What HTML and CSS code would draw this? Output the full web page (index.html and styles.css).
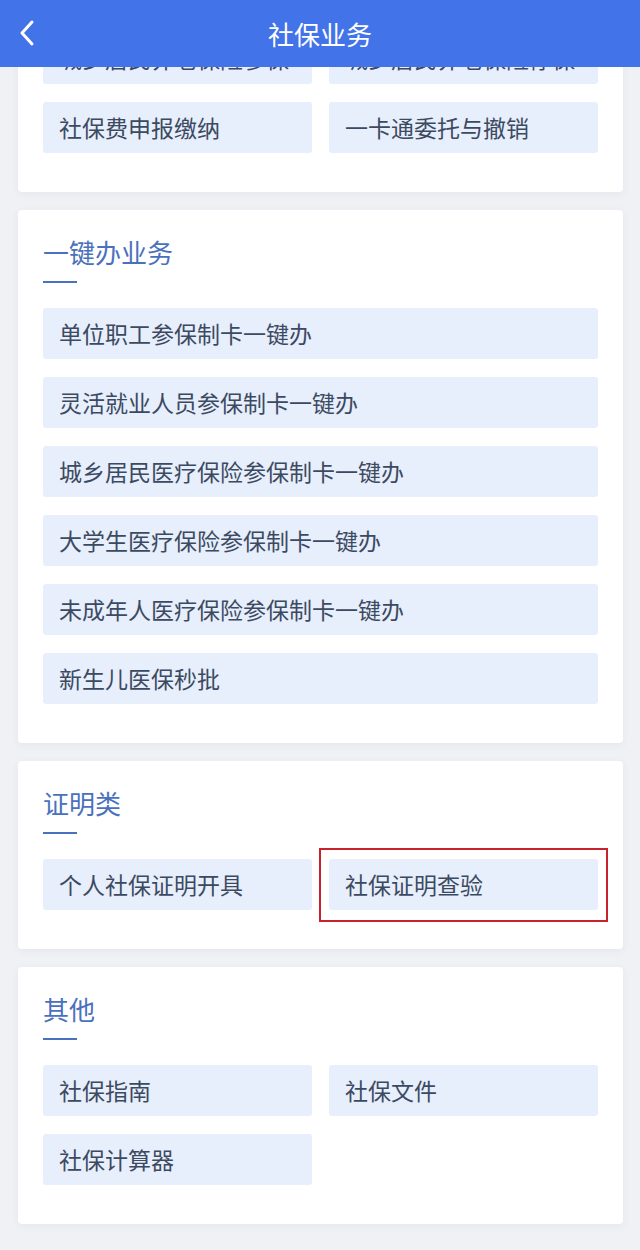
FILE: index.html
```html
<!DOCTYPE html>
<html lang="zh-CN">
<head>
<meta charset="utf-8">
<title>社保业务</title>
<link rel="stylesheet" href="styles.css">
</head>
<body>
<header class="topbar">
  <svg class="back" width="20" height="30" viewBox="0 0 20 30"><polyline points="13,3 3,14 13,25" fill="none" stroke="#fff" stroke-width="3" stroke-linecap="round" stroke-linejoin="round"/></svg>
  <h1 class="title">社保业务</h1>
</header>
<main class="page">
  <section class="card card-first">
    <div class="grid">
      <div class="item">城乡居民养老保险参保</div>
      <div class="item">城乡居民养老保险停保</div>
      <div class="item">社保费申报缴纳</div>
      <div class="item">一卡通委托与撤销</div>
    </div>
  </section>
  <section class="card">
    <h2 class="heading">一键办业务</h2>
    <div class="rule"></div>
    <div class="list">
      <div class="item">单位职工参保制卡一键办</div>
      <div class="item">灵活就业人员参保制卡一键办</div>
      <div class="item">城乡居民医疗保险参保制卡一键办</div>
      <div class="item">大学生医疗保险参保制卡一键办</div>
      <div class="item">未成年人医疗保险参保制卡一键办</div>
      <div class="item">新生儿医保秒批</div>
    </div>
  </section>
  <section class="card">
    <h2 class="heading">证明类</h2>
    <div class="rule"></div>
    <div class="grid">
      <div class="item">个人社保证明开具</div>
      <div class="item item-marked">社保证明查验<span class="mark"></span></div>
    </div>
  </section>
  <section class="card">
    <h2 class="heading">其他</h2>
    <div class="rule"></div>
    <div class="grid">
      <div class="item">社保指南</div>
      <div class="item">社保文件</div>
      <div class="item">社保计算器</div>
    </div>
  </section>
</main>
</body>
</html>
```
FILE: styles.css
```css
html, body {
  margin: 0;
  padding: 0;
  background: #f0f1f5;
  font-family: "Noto Sans CJK SC", "Noto Sans", sans-serif;
}
.topbar {
  position: fixed;
  top: 0;
  left: 0;
  right: 0;
  height: 67px;
  background: #4273e9;
  z-index: 10;
  display: flex;
  align-items: center;
  justify-content: center;
}
.back {
  position: absolute;
  left: 19px;
  top: 19px;
}
.title {
  margin: 0;
  color: #fff;
  font-size: 26px;
  font-weight: 400;
  line-height: 1;
}
.page {
  padding: 8px 17px 40px 18px;
  display: flex;
  flex-direction: column;
  gap: 18px;
}
.card {
  background: #fff;
  border-radius: 4px;
  box-shadow: 0 2px 8px rgba(40, 60, 110, 0.06);
  padding: 29px 25px 39px;
}
.card-first {
  padding-top: 25px;
}
.heading {
  margin: 0;
  font-size: 26px;
  line-height: 26px;
  font-weight: 400;
  color: #4a71bd;
}
.rule {
  width: 34px;
  height: 2px;
  background: #4a71bd;
  margin: 16px 0 25px;
}
.grid {
  display: grid;
  grid-template-columns: 1fr 1fr;
  column-gap: 17px;
  row-gap: 18px;
}
.list {
  display: flex;
  flex-direction: column;
  gap: 18px;
}
.item {
  position: relative;
  height: 51px;
  line-height: 51px;
  background: #e7eefc;
  border-radius: 3px;
  padding-left: 16px;
  font-size: 23px;
  color: #3c4a61;
  white-space: nowrap;
  overflow: visible;
}
.mark {
  position: absolute;
  left: -10px;
  right: -10px;
  top: -11px;
  bottom: -12px;
  border: 2px solid #c8232c;
  pointer-events: none;
}
```
